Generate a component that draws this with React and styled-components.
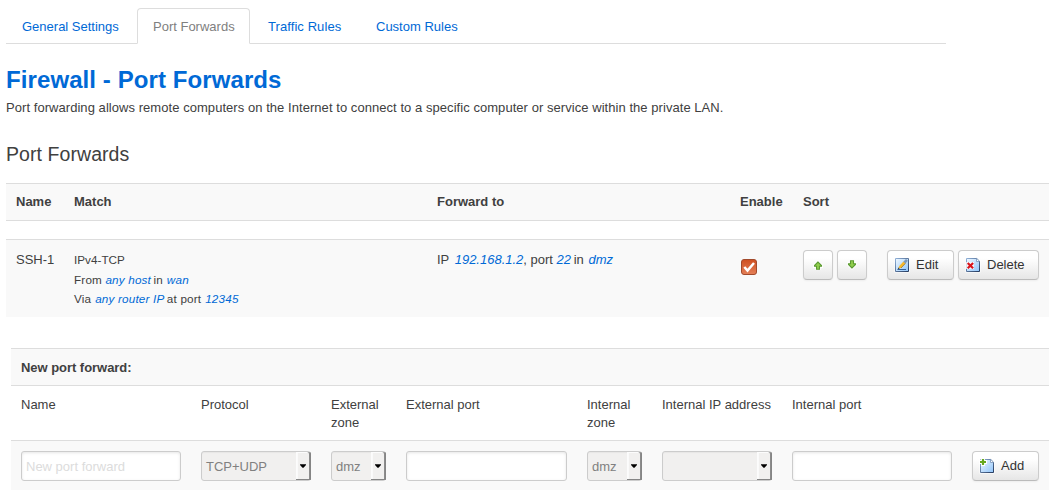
import React from "react";
import styled, { createGlobalStyle, css } from "styled-components";

const GlobalStyle = createGlobalStyle`
  * { box-sizing: border-box; }
  body {
    margin: 0;
    background: #fff;
    color: #404040;
    font: 13px/18px "Liberation Sans", Arial, sans-serif;
  }
  input, button { font: inherit; }
`;

const Page = styled.main`
  width: 1052px;
  height: 500px;
  padding: 8px 3px 0 6px;
  overflow: hidden;
`;

const Tabs = styled.nav`
  display: flex;
  gap: 2px;
  width: 940px;
  height: 36px;
  border-bottom: 1px solid #ddd;
`;

const Tab = styled.a`
  width: ${(p) => p.$width}px;
  height: 36px;
  padding: 0 15px;
  border: 1px solid transparent;
  border-radius: 4px 4px 0 0;
  line-height: 35px;
  white-space: nowrap;
  color: #0069d6;
  letter-spacing: ${(p) => p.$track || 0}px;
  ${(p) =>
    p.$active &&
    css`
      color: gray;
      background: #fff;
      border-color: #ddd #ddd #fff;
    `}
`;

const Title = styled.h1`
  margin: 18px 0 0;
  font-size: 24px;
  line-height: 36px;
  color: #0069d6;
  letter-spacing: 0.09px;
`;

const Description = styled.p`
  margin: 1px 0 0;
  letter-spacing: 0.052px;
`;

const SectionTitle = styled.h2`
  margin: 19px 0 11px;
  font-size: 19.5px;
  font-weight: normal;
  line-height: 36px;
  letter-spacing: 0.07px;
`;

const Row = styled.div`
  display: grid;
  grid-template-columns: ${(p) => p.$columns};
  align-items: start;
  height: ${(p) => p.$height}px;
  padding-top: ${(p) => p.$top || 9}px;
  border-top: 1px solid #ddd;
  border-bottom: ${(p) => (p.$closed ? "1px solid #ddd" : "0")};
  background: ${(p) => (p.$plain ? "#fff" : "#f9f9f9")};
  font-weight: ${(p) => (p.$bold ? "bold" : "normal")};
`;

const RuleTable = styled.section`
  display: grid;
  gap: 18px;
`;

const NewRule = styled.form`
  margin: 31px 0 0 5px;
`;

const Cell = styled.div`
  padding: ${(p) => p.$drop || 0}px 10px 0;
  white-space: ${(p) => (p.$wrap ? "normal" : "nowrap")};
  letter-spacing: ${(p) => p.$track || 0}px;
`;

const Match = styled.div`
  font-size: 11.7px;
  line-height: 19.5px;
  letter-spacing: ${(p) => p.$track || 0}px;
`;

const Value = styled.var`
  margin: 0 ${(p) => p.$after || 0}px 0 ${(p) => p.$before || 0}px;
  color: #0069d6;
`;

const Buttons = styled.div`
  display: flex;
  gap: 4px;
  padding: 0 10px;
`;

const Button = styled.button`
  display: flex;
  align-items: center;
  justify-content: ${(p) => (p.$square ? "center" : "flex-start")};
  gap: 6px;
  width: ${(p) => p.$width}px;
  height: 30px;
  padding: ${(p) => (p.$square ? 0 : "0 0 0 6px")};
  border: 1px solid #ccc;
  border-bottom-color: #bbb;
  border-radius: 4px;
  background: linear-gradient(#fff, #fff 25%, #e6e6e6);
  box-shadow: inset 0 1px 0 rgba(255, 255, 255, 0.2), 0 1px 2px rgba(0, 0, 0, 0.05);
  color: #333;
  svg { flex: none; }
`;

const CheckSlot = styled.div`
  padding: 9px 0 0 10px;
  svg { display: block; }
`;

const Field = styled.input`
  display: block;
  width: ${(p) => p.$width}px;
  height: 30px;
  margin-left: 10px;
  padding: 1px 4px 0;
  border: 1px solid #ccc;
  border-radius: 3px;
  background: #fff;
  box-shadow: inset 0 1px 3px rgba(0, 0, 0, 0.1);
  color: gray;
  &::placeholder { color: #dcdcdc; opacity: 1; }
`;

const SelectBox = styled.div`
  display: flex;
  width: ${(p) => p.$width}px;
  height: 30px;
  margin-left: 10px;
  border: 1px solid #ccc;
  border-radius: 3px;
  background: #f1f0ef;
  box-shadow: inset 0 1px 1px rgba(0, 0, 0, 0.04);
  color: gray;
`;

const SelectLabel = styled.span`
  flex: 1;
  padding-left: 4px;
  line-height: 30px;
`;

const SelectArrow = styled.span`
  display: flex;
  align-items: center;
  justify-content: center;
  width: 15px;
  margin: 0 -1px 0 0;
  padding-right: 1px;
  border-radius: 0 2px 1px 0;
  background: #f1f0ef;
  box-shadow: inset -1px -1px #858585, inset -2px 0 #8c8c8c, inset 1px 1px #fcfcfc, inset 2px 0 #fafafa;
`;

function Select({ width, label }) {
  return (
    <SelectBox $width={width}>
      <SelectLabel>{label}</SelectLabel>
      <SelectArrow>
        <svg width="6" height="4" viewBox="0 0 6 4">
          <path d="M0 .3h6v.8L3.500 3.700h-1L0 1.100z" fill="#000" />
        </svg>
      </SelectArrow>
    </SelectBox>
  );
}

function Arrow({ down }) {
  return (
    <svg width="10" height="10" viewBox="0 0 10 10">
      <g transform={down ? "matrix(1 0 0 -1 0 9)" : "translate(0 1)"}>
        <path d="M5 .5 1 4.5V6h2v3h4V6h2V4.500z" fill="none" stroke="#fff" strokeWidth="2" />
        <path d="M5 1 1.500 4.500v.8h2v3h3v-3h2v-.8z" fill="#8fce4c" stroke="#5c9a33" strokeWidth="1.100" />
      </g>
    </svg>
  );
}

function SheetGradient() {
  return (
    <defs>
      <linearGradient id="sheet" x1="0" y1="0" x2="1" y2="1">
        <stop offset="0" stopColor="#f2f9ff" />
        <stop offset="1" stopColor="#8fc4fa" />
      </linearGradient>
      <linearGradient id="edge" x1="0" y1="0" x2="1" y2="1">
        <stop offset="0" stopColor="#8fb0d8" />
        <stop offset="1" stopColor="#253a5e" />
      </linearGradient>
    </defs>
  );
}

function EditIcon() {
  return (
    <svg width="16" height="16" viewBox="0 0 16 16">
      <SheetGradient />
      <path d="M.5.5h15v15H.5z" fill="#fff" />
      <path d="M1.500 1.500h13v13h-13z" fill="url(#sheet)" stroke="url(#edge)" />
      <path d="M3.500 12.500h8.500" stroke="#31619a" strokeWidth="1" />
      <path d="m4.300 11.400 1.200-2.700 4-4.200 2 1.800L7 11z" fill="#f7b92c" />
      <path d="M7 11l4.500-4.700" stroke="#8f6c1b" strokeWidth=".7" />
      <path d="m9.300 4.700 2.700-2.700 1.900 1.800-2.500 2.700z" fill="#7d98b8" />
      <path d="m3.700 12.200.8-1.800 1.200 1z" fill="#333" />
    </svg>
  );
}

function PageSheet() {
  return (
    <>
      <path d="M.5.5H13L15.500 3v12.500H.5z" fill="#fff" />
      <path d="M1.500 1.500h10.300l2.700 2.700v10.300h-13z" fill="url(#sheet)" stroke="url(#edge)" />
      <path d="M11.500 1.800v2.700h2.800" fill="#fff" stroke="#7592b9" strokeWidth=".8" />
    </>
  );
}

function DeleteIcon() {
  return (
    <svg width="16" height="16" viewBox="0 0 16 16">
      <SheetGradient />
      <PageSheet />
      <path d="M1 5h8v7H1z" fill="#fff" fillOpacity=".75" />
      <path d="m2.700 6 5.400 5.200m0-5.200-5.400 5.200" stroke="#d9151d" strokeWidth="2.200" />
    </svg>
  );
}

function AddIcon() {
  return (
    <svg width="16" height="16" viewBox="0 0 16 16">
      <SheetGradient />
      <PageSheet />
      <path d="M4 0v8M0 4h8" stroke="#fff" strokeWidth="4" />
      <path d="M4 1v6M1 4h6" stroke="#67a81e" strokeWidth="2.200" />
    </svg>
  );
}

function Checkbox() {
  return (
    <svg width="18" height="16" viewBox="0 0 18 16" role="checkbox" aria-checked="true">
      <defs>
        <linearGradient id="check" x1="0" y1="0" x2="0" y2="1">
          <stop offset="0" stopColor="#cf4f20" />
          <stop offset="1" stopColor="#e48058" />
        </linearGradient>
      </defs>
      <rect x="1.500" y=".5" width="15" height="15" rx="2.500" fill="url(#check)" stroke="#a14a2c" />
      <path d="m4.300 8 3.200 3.600L14 4" fill="none" stroke="#fff" strokeWidth="2.500" />
    </svg>
  );
}

const RULE_COLUMNS = "58px 363px 303px 63px 84px 172px";
const FORM_COLUMNS = "180px 130px 75px 181px 75px 130px 180px 87px";

export default function App() {
  return (
    <>
      <GlobalStyle />
      <Page>
        <Tabs>
          <Tab $width={129}>General Settings</Tab>
          <Tab $width={113} $active>Port Forwards</Tab>
          <Tab $width={106} $track={0.08}>Traffic Rules</Tab>
          <Tab $width={114}>Custom Rules</Tab>
        </Tabs>
        <Title>Firewall - Port Forwards</Title>
        <Description>
          Port forwarding allows remote computers on the Internet to connect to a specific computer or service within the private LAN.
        </Description>
        <SectionTitle>Port Forwards</SectionTitle>

        <RuleTable>
          <Row $columns={RULE_COLUMNS} $height={38} $closed $bold>
            <Cell>Name</Cell>
            <Cell>Match</Cell>
            <Cell>Forward to</Cell>
            <Cell>Enable</Cell>
            <Cell>Sort</Cell>
          </Row>
          <Row $columns={RULE_COLUMNS} $height={78} $top={10}>
            <Cell $drop={1}>SSH-1</Cell>
            <Cell>
              <Match $track={0.02}>IPv4-TCP</Match>
              <Match $track={0.18}>From <Value $after={-1}>any host</Value> in <Value $before={0.5}>wan</Value></Match>
              <Match $track={0.18}>Via <Value $before={0.5} $after={-1}>any router IP</Value> at port <Value $before={0.5}>12345</Value></Match>
            </Cell>
            <Cell $drop={1}>IP <Value $before={2}>192.168.1.2</Value>, port <Value $after={-1}>22</Value> in <Value $before={1}>dmz</Value></Cell>
            <CheckSlot><Checkbox /></CheckSlot>
            <Buttons>
              <Button $width={30} $square aria-label="Move up"><Arrow /></Button>
              <Button $width={30} $square aria-label="Move down"><Arrow down /></Button>
            </Buttons>
            <Buttons>
              <Button $width={67}><EditIcon />Edit</Button>
              <Button $width={81}><DeleteIcon />Delete</Button>
            </Buttons>
          </Row>
        </RuleTable>

        <NewRule>
          <Row $columns="1fr" $height={37} $bold>
            <Cell $drop={1} $track={-0.04}>New port forward:</Cell>
          </Row>
          <Row $columns={FORM_COLUMNS} $height={55} $top={10} $plain>
            <Cell>Name</Cell>
            <Cell>Protocol</Cell>
            <Cell $wrap>External zone</Cell>
            <Cell>External port</Cell>
            <Cell $wrap>Internal zone</Cell>
            <Cell>Internal IP address</Cell>
            <Cell>Internal port</Cell>
          </Row>
          <Row $columns={FORM_COLUMNS} $height={50} $top={10}>
            <Field $width={160} placeholder="New port forward" />
            <Select width={110} label="TCP+UDP" />
            <Select width={55} label="dmz" />
            <Field $width={161} />
            <Select width={55} label="dmz" />
            <Select width={110} />
            <Field $width={160} />
            <Buttons>
              <Button $width={67} type="button"><AddIcon />Add</Button>
            </Buttons>
          </Row>
        </NewRule>
      </Page>
    </>
  );
}
